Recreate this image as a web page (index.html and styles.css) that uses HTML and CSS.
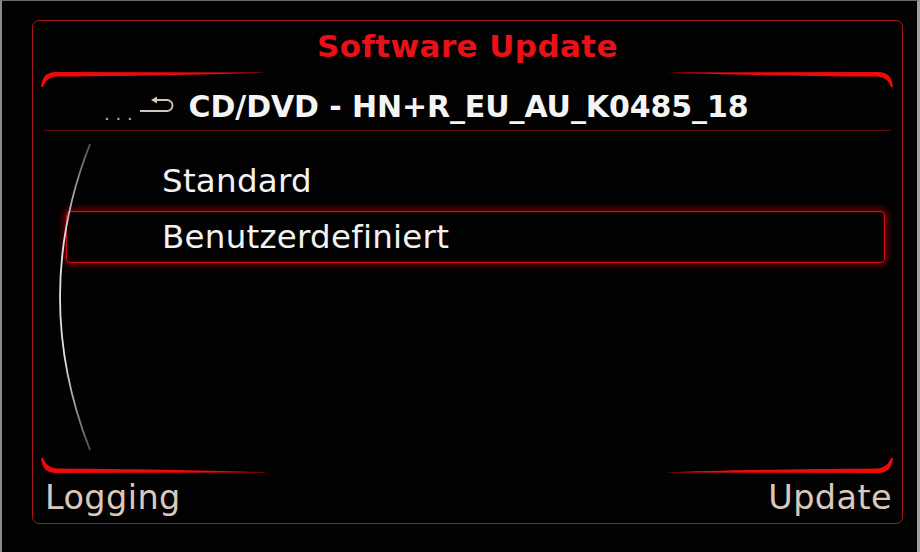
FILE: index.html
```html
<!DOCTYPE html>
<html>
<head>
<meta charset="utf-8">
<link rel="stylesheet" href="styles.css">
</head>
<body>
<div class="screen">
  <div class="frame">
    <div class="title">Software Update</div>
    <div class="deco deco-top">
      <svg class="arc" width="230" height="17" viewBox="0 0 230 17"><path d="M1,16 C2,6 6,1.2 16,1 L228,1.6 C190,3.2 120,4.8 18,5.6 C10,5.8 6,9 3,16 Z"/></svg>
      <svg class="arc flip-x" width="230" height="17" viewBox="0 0 230 17"><path d="M1,16 C2,6 6,1.2 16,1 L228,1.6 C190,3.2 120,4.8 18,5.6 C10,5.8 6,9 3,16 Z"/></svg>
    </div>
    <div class="path">
      <span class="dots">...</span>
      <svg class="back" width="36" height="17" viewBox="0 0 36 17"><path d="M1,15 H28 A5.5,5.5 0 0 0 28,4 H16" fill="none" stroke="#d8c6b8" stroke-width="1.8"/><path d="M18,0.6 L12,4 L18,7.4 Z" fill="#d8c6b8"/></svg>
      <span class="path-text">CD/DVD - HN+R_EU_AU_K0485_18</span>
    </div>
    <div class="list">
      <svg class="scroll" width="40" height="310" viewBox="0 0 40 310"><defs><linearGradient id="sg" x1="0" y1="0" x2="0" y2="1"><stop offset="0" stop-color="#555"/><stop offset="0.3" stop-color="#e0e0e0"/><stop offset="0.7" stop-color="#e0e0e0"/><stop offset="1" stop-color="#555"/></linearGradient></defs><path d="M33,2 Q-27,155 33,308" fill="none" stroke="url(#sg)" stroke-width="1.8"/></svg>
      <div class="item">Standard</div>
      <div class="item selected">Benutzerdefiniert</div>
    </div>
    <div class="deco deco-bottom">
      <svg class="arc flip-y" width="230" height="17" viewBox="0 0 230 17"><path d="M1,16 C2,6 6,1.2 16,1 L228,1.6 C190,3.2 120,4.8 18,5.6 C10,5.8 6,9 3,16 Z"/></svg>
      <svg class="arc flip-xy" width="230" height="17" viewBox="0 0 230 17"><path d="M1,16 C2,6 6,1.2 16,1 L228,1.6 C190,3.2 120,4.8 18,5.6 C10,5.8 6,9 3,16 Z"/></svg>
    </div>
    <div class="footer">
      <span class="soft">Logging</span>
      <span class="soft">Update</span>
    </div>
  </div>
</div>
</body>
</html>
```

FILE: styles.css
```css
html, body {
  margin: 0;
  padding: 0;
  background: #000;
}
.screen {
  width: 920px;
  height: 552px;
  box-sizing: border-box;
  border-top: 1px solid #6a6a6a;
  border-left: 2px solid #8a8a8a;
  border-right: 3px solid #a0a0a0;
  background: #020202;
  padding-top: 19px;
  padding-left: 30px;
  font-family: "DejaVu Sans", Verdana, sans-serif;
}
.frame {
  width: 871px;
  height: 504px;
  box-sizing: border-box;
  border: 1.5px solid #a8141a;
  border-radius: 7px;
  display: flex;
  flex-direction: column;
}
.title {
  height: 50px;
  line-height: 50px;
  text-align: center;
  color: #ea1018;
  font-weight: bold;
  font-size: 31px;
  letter-spacing: 0.4px;
}
.deco {
  display: flex;
  justify-content: space-between;
  padding: 0 8px 0 7px;
}
.deco-top {
  height: 12px;
}
.deco-bottom {
  height: 15px;
  margin-top: -1px;
}
.arc {
  overflow: visible;
  display: block;
}
.arc path {
  fill: #ee0a0a;
}
.flip-x { transform: scaleX(-1); }
.flip-y { transform: scaleY(-1); }
.flip-xy { transform: scale(-1, -1); }
.path {
  height: 47px;
  display: flex;
  align-items: center;
  margin: 0 11px;
  border-bottom: 1.5px solid #5c0c10;
  padding-left: 60px;
}
.dots {
  color: #b8b0aa;
  font-size: 18px;
  letter-spacing: 5.8px;
  margin-top: 13px;
  margin-right: 0;
}
.back {
  display: block;
  margin-bottom: 4px;
  margin-right: 14px;
}
.path-text {
  color: #f4f4f4;
  font-weight: bold;
  font-size: 30px;
  letter-spacing: -0.1px;
}
.list {
  position: relative;
  height: 327px;
  padding-top: 24px;
  box-sizing: border-box;
}
.scroll {
  position: absolute;
  left: 24px;
  top: 11px;
}
.item {
  height: 52px;
  line-height: 52px;
  box-sizing: border-box;
  margin-left: 33px;
  margin-right: 17px;
  padding-left: 96px;
  color: #f2f2f2;
  font-size: 32.5px;
  letter-spacing: 0.25px;
}
.item + .item {
  margin-top: 4px;
}
.selected {
  border: 1.5px solid #c8141c;
  border-radius: 4px;
  line-height: 50px;
  padding-left: 95px;
  box-shadow: 0 0 7px 2px rgba(170, 0, 10, 0.75), inset 0 0 4px rgba(150, 0, 10, 0.6);
}
.footer {
  height: 50px;
  line-height: 52px;
  display: flex;
  justify-content: space-between;
  padding: 0 10px 0 12px;
}
.soft {
  color: #dcc8ba;
  font-size: 33.5px;
  letter-spacing: 0.4px;
}
```
